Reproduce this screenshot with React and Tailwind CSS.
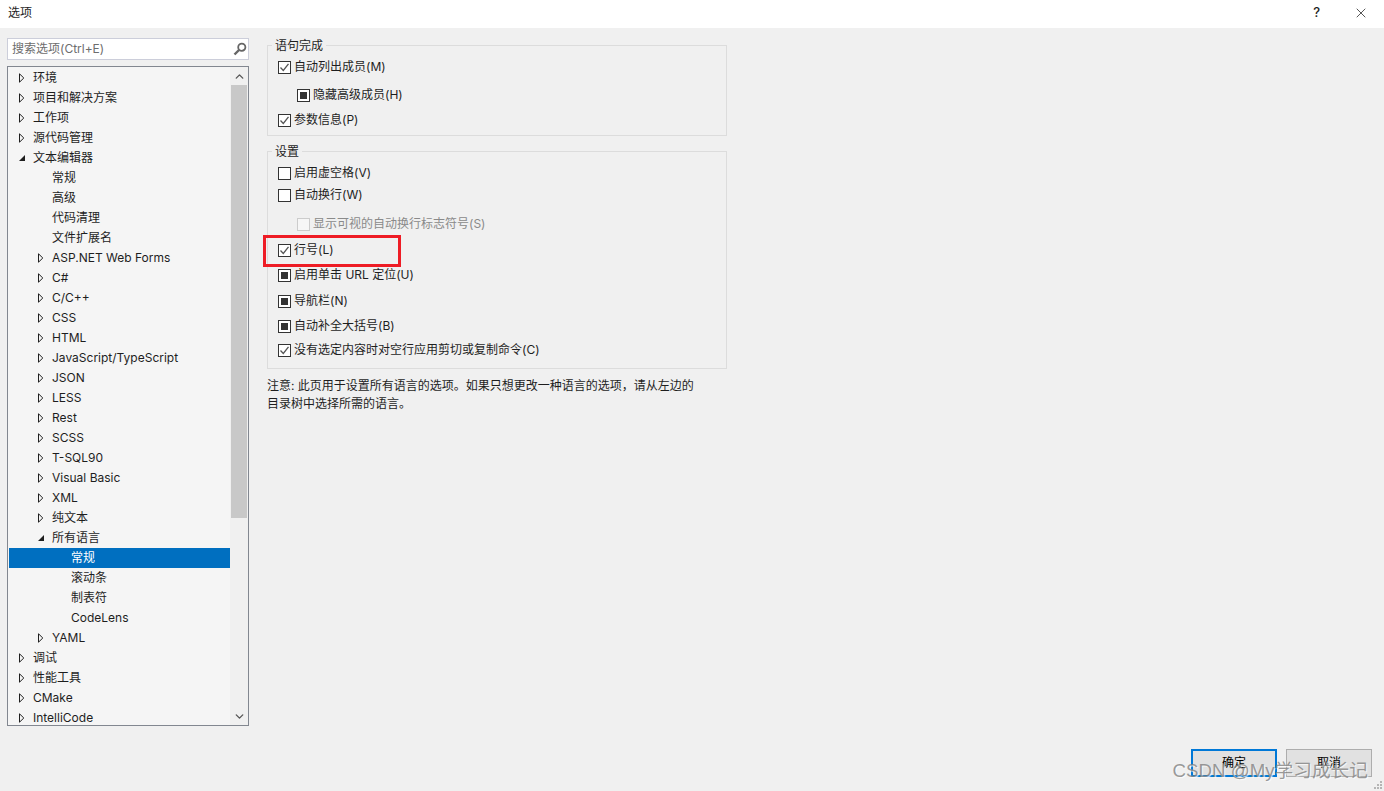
import { ChevronUp, ChevronDown, X } from 'lucide-react';

const font = 'font-["Inter","Noto_Sans_CJK_SC",sans-serif]';

const tree = [
  ['环境', 0, 'closed'],
  ['项目和解决方案', 0, 'closed'],
  ['工作项', 0, 'closed'],
  ['源代码管理', 0, 'closed'],
  ['文本编辑器', 0, 'open'],
  ['常规', 1],
  ['高级', 1],
  ['代码清理', 1],
  ['文件扩展名', 1],
  ['ASP.NET Web Forms', 1, 'closed'],
  ['C#', 1, 'closed'],
  ['C/C++', 1, 'closed'],
  ['CSS', 1, 'closed'],
  ['HTML', 1, 'closed'],
  ['JavaScript/TypeScript', 1, 'closed'],
  ['JSON', 1, 'closed'],
  ['LESS', 1, 'closed'],
  ['Rest', 1, 'closed'],
  ['SCSS', 1, 'closed'],
  ['T-SQL90', 1, 'closed'],
  ['Visual Basic', 1, 'closed'],
  ['XML', 1, 'closed'],
  ['纯文本', 1, 'closed'],
  ['所有语言', 1, 'open'],
  ['常规', 2, null, true],
  ['滚动条', 2],
  ['制表符', 2],
  ['CodeLens', 2],
  ['YAML', 1, 'closed'],
  ['调试', 0, 'closed'],
  ['性能工具', 0, 'closed'],
  ['CMake', 0, 'closed'],
  ['IntelliCode', 0, 'closed'],
];

const depthClass = ['pl-[24px]', 'pl-[43px]', 'pl-[62px]'];

function Arrow({ state }) {
  if (state === 'open') {
    return (
      <svg width="8" height="8" viewBox="0 0 8 8" className="absolute left-[-15px] top-[6px]">
        <path d="M1 7 L7 7 L7 1 Z" fill="#1e1e1e" />
      </svg>
    );
  }
  return (
    <svg width="7" height="10" viewBox="0 0 7 10" className="absolute left-[-15px] top-[5px]">
      <path d="M1.5 0.8 L5.8 5 L1.5 9.2 Z" fill="#f5f5f5" stroke="#1e1e1e" strokeWidth="1" />
    </svg>
  );
}

function TreeRow({ label, depth, state, selected }) {
  return (
    <div className={`h-5 shrink-0 flex items-center text-xs leading-5 ${depthClass[depth]} ${selected ? 'bg-[#006fc0] text-white' : 'text-[#1e1e1e]'}`}>
      <span className="relative whitespace-nowrap">
        {state && <Arrow state={state} />}
        {label}
      </span>
    </div>
  );
}

function Check({ kind, disabled }) {
  return (
    <span className={`w-[13px] h-[13px] shrink-0 border flex items-center justify-center ${disabled ? 'border-[#cccccc] bg-[#f6f6f6]' : 'border-[#333333] bg-white'}`}>
      {kind === 'checked' && (
        <svg width="11" height="11" viewBox="0 0 11 11">
          <path d="M1.5 5.5 L4.3 8.5 L9.5 1.8" fill="none" stroke="#555555" strokeWidth="1.3" />
        </svg>
      )}
      {kind === 'mixed' && <span className="w-[7px] h-[7px] bg-[#333333]" />}
    </span>
  );
}

function Option({ label, kind, indent, disabled, className = '' }) {
  return (
    <div className={`h-5 flex items-center gap-[3px] text-xs leading-5 ${indent ? 'pl-[19px]' : ''} ${disabled ? 'text-[#8a8a8a]' : 'text-[#1e1e1e]'} ${className}`}>
      <Check kind={kind} disabled={disabled} />
      <span className="whitespace-nowrap">{label}</span>
    </div>
  );
}

function Group({ title, children, className = '' }) {
  return (
    <fieldset className={`border border-[#dcdcdc] w-[460px] pl-[10px] ${className}`}>
      <legend className="-ml-[6px] px-[3px] text-xs leading-[12px] h-[12px] translate-y-px text-[#1e1e1e]">{title}</legend>
      {children}
    </fieldset>
  );
}

export default function App() {
  return (
    <div className={`relative w-[1384px] h-[791px] overflow-hidden bg-[#f0f0f0] flex flex-col ${font}`}>
      {/* 标题栏 */}
      <div className="h-7 shrink-0 bg-white flex items-center pb-[2px] text-xs text-[#1e1e1e]">
        <span className="ml-2 flex-1">选项</span>
        <span className="mr-[33px] text-[13px] font-medium">?</span>
        <X size={16} strokeWidth={1} className="mr-[15px] text-black" />
      </div>

      <div className="flex flex-1 min-h-0 pt-[10px]">
        {/* 左侧树 */}
        <div className="w-[242px] ml-[7px] shrink-0 flex flex-col">
          <div className="h-[22px] border border-[#ccceda] bg-white flex items-center pl-1 pr-[1px]">
            <span className="flex-1 text-xs text-[#6d6d6d]">搜索选项(Ctrl+E)</span>
            <svg width="14" height="14" viewBox="0 0 14 14">
              <circle cx="8.8" cy="5.2" r="3.6" fill="none" stroke="#666666" strokeWidth="1.8" />
              <path d="M6 8 L1.5 12.5" stroke="#666666" strokeWidth="2.4" />
            </svg>
          </div>
          <div className="mt-[6px] h-[660px] border border-[#828790] bg-[#f5f5f5] flex pt-[1px] pl-[1px]">
            <div className="flex-1 min-w-0 flex flex-col overflow-hidden">
              {tree.map((row, i) => (
                <TreeRow key={i} label={row[0]} depth={row[1]} state={row[2]} selected={row[3]} />
              ))}
            </div>
            <div className="w-[18px] -mt-[1px] shrink-0 bg-[#f0f0f0] flex flex-col">
              <div className="h-[18px] flex items-center justify-center">
                <ChevronUp size={13} strokeWidth={2.5} className="text-[#555555]" />
              </div>
              <div className="h-[433px] bg-[#c8c8c8] mx-[1px]" />
              <div className="flex-1" />
              <div className="h-[18px] flex items-center justify-center">
                <ChevronDown size={13} strokeWidth={2.5} className="text-[#555555]" />
              </div>
            </div>
          </div>
        </div>

        {/* 右侧选项 */}
        <div className="ml-[18px] pt-[1px] flex flex-col">
          <Group title="语句完成" className="h-[97px]">
            <Option label="自动列出成员(M)" kind="checked" className="mt-[6px]" />
            <Option label="隐藏高级成员(H)" kind="mixed" indent className="mt-[8px]" />
            <Option label="参数信息(P)" kind="checked" className="mt-[5px]" />
          </Group>
          <Group title="设置" className="mt-[9px] h-[224px]">
            <Option label="启用虚空格(V)" kind="none" className="mt-[6px]" />
            <Option label="自动换行(W)" kind="none" className="mt-[2px]" />
            <Option label="显示可视的自动换行标志符号(S)" kind="none" indent disabled className="mt-[9px]" />
            <Option label="行号(L)" kind="checked" className="mt-[6px]" />
            <Option label="启用单击 URL 定位(U)" kind="mixed" className="mt-[5px]" />
            <Option label="导航栏(N)" kind="mixed" className="mt-[6px]" />
            <Option label="自动补全大括号(B)" kind="mixed" className="mt-[5px]" />
            <Option label="没有选定内容时对空行应用剪切或复制命令(C)" kind="checked" className="mt-[4px]" />
          </Group>
          <p className="mt-[8px] w-[460px] text-xs leading-[18px] text-[#1e1e1e]">
            注意: 此页用于设置所有语言的选项。如果只想更改一种语言的选项，请从左边的
            <br />
            目录树中选择所需的语言。
          </p>
        </div>
      </div>

      {/* 底部按钮 */}
      <div className="h-[65px] shrink-0 flex justify-end items-start pt-[23px] pr-[12px] gap-[9px]">
        <button className="w-[86px] h-[28px] border-2 border-[#0078d7] bg-[#e1e1e1] text-xs text-black">确定</button>
        <button className="w-[86px] h-[28px] border border-[#adadad] bg-[#e1e1e1] text-xs text-black">取消</button>
      </div>

      {/* 红框标注 */}
      <div className="absolute left-[263px] top-[235px] w-[138px] h-[32px] border-[3px] border-[#ee1c25]" />

      {/* 水印 */}
      <div className='absolute right-[16px] top-[758px] font-["Liberation_Sans","Noto_Sans_CJK_SC",sans-serif] text-[18.7px] leading-[26px] whitespace-nowrap text-[#808080]/80 [text-shadow:1px_1px_1px_rgba(255,255,255,0.8)]'>
        CSDN @My学习成长记
      </div>

      {/* 窗口缩放角 */}
      <svg width="10" height="10" viewBox="0 0 10 10" className="absolute right-[1px] bottom-[1px]">
        <g fill="#b5b5b5">
          <rect x="7" y="1" width="2" height="2" />
          <rect x="4" y="4" width="2" height="2" />
          <rect x="7" y="4" width="2" height="2" />
          <rect x="1" y="7" width="2" height="2" />
          <rect x="4" y="7" width="2" height="2" />
          <rect x="7" y="7" width="2" height="2" />
        </g>
      </svg>
    </div>
  );
}
